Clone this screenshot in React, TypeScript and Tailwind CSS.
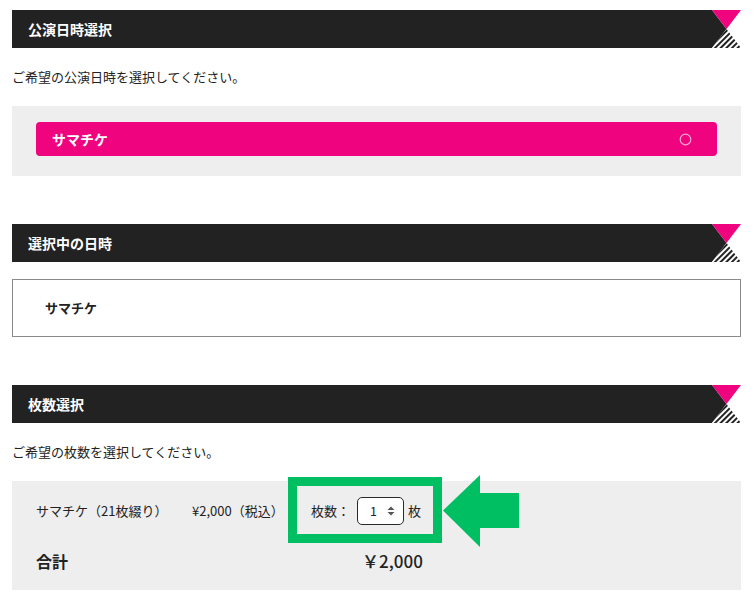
import React from "react";

const font = { fontFamily: '"Noto Sans CJK JP", "Noto Sans", sans-serif' };

function Corner({ id }: { id: string }) {
  return (
    <svg width="29" height="38" viewBox="0 0 29 38" className="block shrink-0">
      <defs>
        <pattern id={id} width="4" height="4" patternUnits="userSpaceOnUse" patternTransform="rotate(45)">
          <rect width="4" height="4" fill="#ffffff" />
          <rect width="2" height="4" fill="#222222" />
        </pattern>
      </defs>
      <polygon points="0,0 14.5,19 0,38" fill="#222222" />
      <polygon points="0,0 29,0 14.5,19" fill="#f0037f" />
      <polygon points="14.5,19 29,38 0,38" fill={`url(#${id})`} />
    </svg>
  );
}

function SectionTitle({ title, id }: { title: string; id: string }) {
  return (
    <div className="flex h-[38px]">
      <div className="flex flex-1 items-center bg-[#222222] pl-4 text-[14px] font-bold text-white">
        {title}
      </div>
      <Corner id={id} />
    </div>
  );
}

function Lead({ text }: { text: string }) {
  return (
    <div className="flex h-[58px] items-center text-[13px] text-[#222]">{text}</div>
  );
}

function Stepper() {
  return (
    <div className="flex h-[28px] w-[47px] items-center rounded-[5px] border-[1.5px] border-[#2a2a2a] bg-white pl-[12px] text-[12.5px] text-[#222]">
      <span className="w-[17px]">1</span>
      <svg width="8" height="12" viewBox="0 0 8 12">
        <polygon points="4,1.5 7.5,5 0.5,5" fill="#555" />
        <polygon points="0.5,7 7.5,7 4,10.5" fill="#555" />
      </svg>
    </div>
  );
}

export default function App() {
  return (
    <div className="relative min-h-[602px] w-[756px] bg-white" style={font}>
      <div className="ml-3 flex w-[729px] flex-col pt-[10px]">
        <SectionTitle title="公演日時選択" id="hatch1" />
        <Lead text="ご希望の公演日時を選択してください。" />
        <div className="bg-[#eeeeee] px-6 pt-4 pb-5">
          <div className="flex h-[34px] items-center justify-between rounded-[4px] bg-[#f0037f] pl-4 pr-[25px] text-[14px] font-bold text-white">
            <span>サマチケ</span>
            <svg width="13" height="13" viewBox="0 0 13 13">
              <circle cx="6.5" cy="6.5" r="5.3" fill="none" stroke="#f9a6cf" strokeWidth="1.2" />
            </svg>
          </div>
        </div>

        <div className="mt-12">
          <SectionTitle title="選択中の日時" id="hatch2" />
        </div>
        <div className="mt-[17px] flex h-[58px] items-center border border-[#8a8a8a] pl-8 text-[13px] font-bold text-[#222]">
          サマチケ
        </div>

        <div className="mt-12">
          <SectionTitle title="枚数選択" id="hatch3" />
        </div>
        <Lead text="ご希望の枚数を選択してください。" />
        <div className="h-[109px] bg-[#eeeeee] px-6 pt-4">
          <div className="flex h-[28px] items-center text-[13px] text-[#222]">
            <span className="w-[156px]">サマチケ（21枚綴り）</span>
            <span className="w-[119px]">¥2,000（税込）</span>
            <span className="w-[46px]">枚数：</span>
            <Stepper />
            <span className="ml-[4px]">枚</span>
          </div>
          <div className="mt-6 flex h-[24px] items-center text-[#222]">
            <span className="w-[326px] text-[16px] font-bold">合計</span>
            <span className="text-[17px] font-medium">￥2,000</span>
          </div>
        </div>
      </div>

      <div className="absolute top-[477px] left-[288px] h-[66px] w-[154px] border-[9px] border-[#00bf63]" />
      <svg className="absolute top-[474px] left-[442px]" width="78" height="74" viewBox="0 0 78 74">
        <polygon points="1,36.5 38,1 38,19 77,19 77,54 38,54 38,73" fill="#00bf63" />
      </svg>
    </div>
  );
}
